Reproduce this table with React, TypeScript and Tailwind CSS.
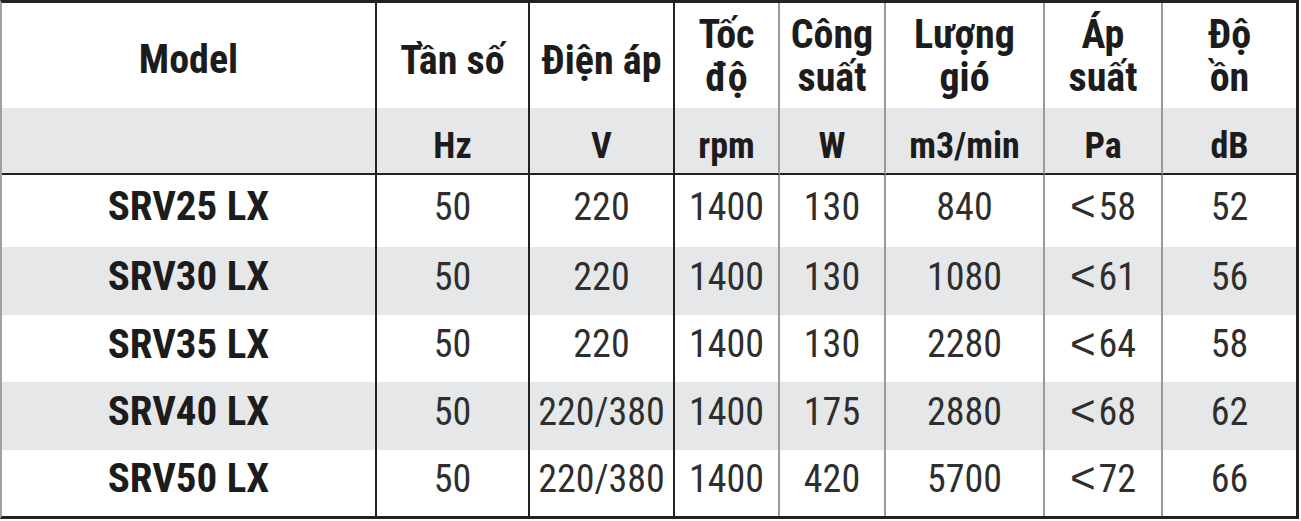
import React from 'react';

const FONT = '[font-family:"Roboto_Condensed",Roboto,sans-serif] [font-stretch:75%]';

type Col = { head: string[]; unit: string; line: string };

const cols: Col[] = [
  { head: ['Tần số'], unit: 'Hz', line: 'border-[#222]' },
  { head: ['Điện áp'], unit: 'V', line: 'border-[#222]' },
  { head: ['Tốc', 'độ'], unit: 'rpm', line: 'border-[#9a9a9a]' },
  { head: ['Công', 'suất'], unit: 'W', line: 'border-[#9a9a9a]' },
  { head: ['Lượng', 'gió'], unit: 'm3/min', line: 'border-[#9a9a9a]' },
  { head: ['Áp', 'suất'], unit: 'Pa', line: 'border-[#9a9a9a]' },
  { head: ['Độ', 'ồn'], unit: 'dB', line: 'border-transparent' },
];

const rows = [
  ['SRV25 LX', '50', '220', '1400', '130', '840', '<58', '52'],
  ['SRV30 LX', '50', '220', '1400', '130', '1080', '<61', '56'],
  ['SRV35 LX', '50', '220', '1400', '130', '2280', '<64', '58'],
  ['SRV40 LX', '50', '220/380', '1400', '175', '2880', '<68', '62'],
  ['SRV50 LX', '50', '220/380', '1400', '420', '5700', '<72', '66'],
];

// row heights differ slightly in the scan
const rowH = ['h-[72px]', 'h-[68px]', 'h-[67px]', 'h-[68px]', 'h-[66px]'];

const lines = ['border-[#222]', ...cols.map((c) => c.line)];

function Value({ v }: { v: string }) {
  if (v.startsWith('<')) {
    return (
      <span className="flex items-center">
        <span className="[font-family:'Liberation_Sans',Arial,sans-serif] text-[44px] leading-none mr-[3px] -mt-[2px]">&lt;</span>
        {v.slice(1)}
      </span>
    );
  }
  return <>{v}</>;
}

export default function App() {
  return (
    <div className={`w-[1301px] h-[521px] bg-white ${FONT}`}>
      <div className="w-[1299px] border-t-[3px] border-b-[3px] border-l-2 border-r-[3px] border-t-[#222] border-b-[#222] border-l-[#a0a0a0] border-r-[#222]">
        <div className="grid grid-cols-[375px_153px_145px_105px_106px_159px_118px_133px]">
          {/* header titles */}
          <div className="h-[105px] border-r-2 border-[#222] flex items-center justify-center pt-2 text-[40px] font-bold text-[#1c1c1c]">
            Model
          </div>
          {cols.map((c, i) => (
            <div
              key={c.unit}
              className={`h-[105px] flex flex-col items-center justify-center text-[40px] leading-[43px] font-bold text-[#1c1c1c] ${
                c.head.length === 1 ? 'pt-[10px]' : 'pt-0'
              } ${i < cols.length - 1 ? `border-r-2 ${c.line}` : ''}`}
            >
              {c.head.map((h) => (
                <span key={h}>{h}</span>
              ))}
            </div>
          ))}

          {/* units */}
          <div className="h-[67px] bg-[#e6e7e8] border-r-2 border-[#222] border-b-2 border-b-[#222]" />
          {cols.map((c, i) => (
            <div
              key={c.unit + 'u'}
              className={`h-[67px] bg-[#e6e7e8] border-b-2 border-b-[#222] flex items-center justify-center pt-[10px] text-[36px] font-bold text-[#1c1c1c] ${
                i < cols.length - 1 ? `border-r-2 ${c.line}` : ''
              }`}
            >
              {c.unit}
            </div>
          ))}

          {/* data */}
          {rows.map((r, ri) =>
            r.map((v, ci) => (
              <div
                key={ri + '-' + ci}
                className={`${rowH[ri]} flex items-center justify-center pb-2 ${
                  ri % 2 === 1 ? 'bg-[#e6e7e8]' : 'bg-white'
                } ${ci < r.length - 1 ? `border-r-2 ${lines[ci]}` : ''} ${
                  ci === 0 ? 'text-[41px] font-bold text-[#1c1c1c]' : 'text-[38px] text-[#2e2e2e]'
                }`}
              >
                <Value v={v} />
              </div>
            )),
          )}
        </div>
      </div>
    </div>
  );
}
